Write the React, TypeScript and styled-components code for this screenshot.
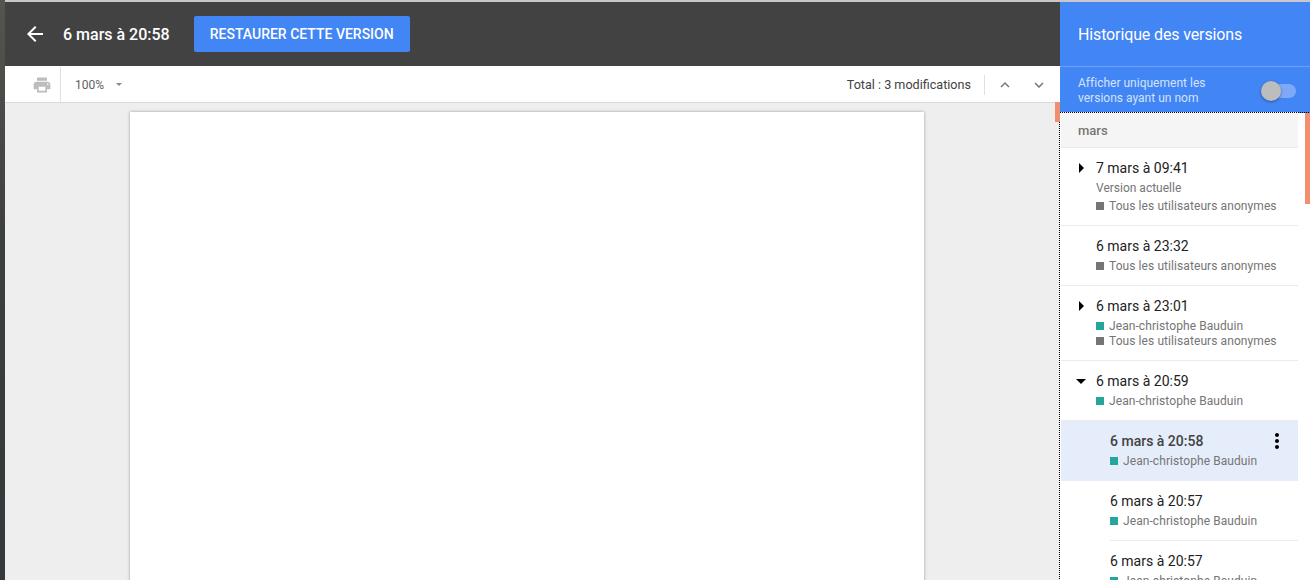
import React from 'react';
import styled, { createGlobalStyle } from 'styled-components';

const GlobalStyle = createGlobalStyle`
    html, body {
        margin: 0;
        padding: 0;
        background: #fff;
    }
    body {
        font-family: Roboto, "Liberation Sans", sans-serif;
    }
`;

type Editor = { name: string, color: string };
type Revision = {
    time: string,
    caret?: 'right' | 'down',
    note?: string,
    editors: Editor[],
    nested?: boolean,
    selected?: boolean,
    inset?: boolean,
};

const anon: Editor = { name: 'Tous les utilisateurs anonymes', color: '#757575' };
const jc: Editor = { name: 'Jean-christophe Bauduin', color: '#26a69a' };

const revisions: Revision[] = [
    { time: '7 mars à 09:41', caret: 'right', note: 'Version actuelle', editors: [anon] },
    { time: '6 mars à 23:32', editors: [anon] },
    { time: '6 mars à 23:01', caret: 'right', editors: [jc, anon] },
    { time: '6 mars à 20:59', caret: 'down', editors: [jc] },
    { time: '6 mars à 20:58', nested: true, selected: true, editors: [jc] },
    { time: '6 mars à 20:57', nested: true, inset: true, editors: [jc] },
    { time: '6 mars à 20:57', nested: true, editors: [jc] },
];

const Screen = styled.div`
    display: flex;
    position: relative;
    width: 1310px;
    height: 580px;
    overflow: hidden;
`;

const Desktop = styled.div`
    width: 5px;
    flex: none;
    background: linear-gradient(180deg, #55554f 0%, #3d4040 40%, #34383a 100%);
`;

const Main = styled.div`
    flex: 1;
    min-width: 0;
    display: flex;
    flex-direction: column;
    border-top: 2px solid #c8c8c8;
`;

const TopBar = styled.div`
    height: 64px;
    flex: none;
    display: flex;
    align-items: center;
    background: #424242;
    color: #fff;
`;

const BackIcon = styled.svg`
    width: 24px;
    height: 24px;
    margin-left: 18px;
    fill: #fff;
`;

const DateTitle = styled.div`
    margin-left: 16px;
    font-size: 16px;
    font-weight: 500;
    color: #fff;
`;

const RestoreButton = styled.button`
    margin-left: 24px;
    height: 36px;
    width: 216px;
    padding: 0;
    border: 0;
    border-radius: 2px;
    background: #4285f4;
    color: #fff;
    font-family: inherit;
    font-size: 14px;
    font-weight: 500;
    text-transform: uppercase;
`;

const ToolBar = styled.div`
    height: 37px;
    box-sizing: border-box;
    flex: none;
    display: flex;
    align-items: center;
    background: #fff;
    border-top: 1px solid #fff;
    border-bottom: 1px solid #dadada;
`;

const PrintSlot = styled.div`
    width: 56px;
    height: 100%;
    display: flex;
    align-items: center;
    justify-content: flex-end;
    padding-right: 8px;
    box-sizing: border-box;
    border-right: 1px solid #e0e0e0;
    svg {
        width: 20px;
        height: 20px;
        fill: #bdbdbd;
    }
`;

const Zoom = styled.div`
    margin-left: 14px;
    font-size: 12px;
    color: #616161;
`;

const ZoomCaret = styled.span`
    margin-left: 12px;
    width: 0;
    height: 0;
    border-left: 3px solid transparent;
    border-right: 3px solid transparent;
    border-top: 3px solid #8a8a8a;
`;

const Total = styled.div`
    margin-left: auto;
    padding-right: 13px;
    font-size: 12.6px;
    color: #424242;
    line-height: 20px;
`;

const Nav = styled.div`
    display: flex;
    align-items: center;
    gap: 16px;
    height: 20px;
    padding: 0 12px 0 11px;
    border-left: 1px solid #e0e0e0;
    svg {
        width: 18px;
        height: 18px;
        fill: #757575;
    }
`;

const Canvas = styled.div`
    flex: 1;
    min-height: 0;
    background: #eeeeee;
    padding: 9px 0 0 125px;
`;

const Page = styled.div`
    width: 794px;
    height: 600px;
    background: #fff;
    box-shadow: 0 0 3px rgba(0, 0, 0, 0.35);
`;

const Sidebar = styled.div`
    width: 250px;
    flex: none;
    display: flex;
    flex-direction: column;
    border-top: 2px solid #c8c8c8;
`;

const SideHead = styled.div`
    height: 64px;
    flex: none;
    display: flex;
    align-items: center;
    padding-left: 18px;
    background: #4285f4;
    color: #fff;
    font-size: 16px;
    letter-spacing: -0.13px;
    border-bottom: 1px solid #6d9ff6;
`;

const FilterRow = styled.div`
    height: 46px;
    flex: none;
    display: flex;
    align-items: center;
    justify-content: space-between;
    box-sizing: border-box;
    padding: 1px 14px 0 18px;
    background: #4285f4;
    color: #d5e3fc;
    font-size: 12px;
    line-height: 15px;
    letter-spacing: 0.01px;
`;

const Toggle = styled.div`
    position: relative;
    width: 34px;
    height: 14px;
    border-radius: 7px;
    background: #7ea9f7;
`;

const Thumb = styled.span`
    position: absolute;
    left: -1px;
    top: -3px;
    width: 20px;
    height: 20px;
    border-radius: 50%;
    background: #bdbdbd;
    box-shadow: 0 1px 3px rgba(0, 0, 0, 0.35);
`;

const ListPane = styled.div`
    position: relative;
    flex: 1;
    min-height: 0;
    background: #fff;
    outline: 1px dotted #000;
`;

const List = styled.div`
    width: 237px;
    margin-left: 1px;
`;

const MonthHead = styled.div`
    height: 34px;
    box-sizing: content-box;
    display: flex;
    align-items: center;
    padding: 1px 0 0 17px;
    margin-top: -1px;
    background: #f5f5f5;
    border-bottom: 1px solid #ebebeb;
    color: #757575;
    font-size: 13px;
    font-weight: 500;
`;

const Row = styled.div<{ $nested?: boolean, $selected?: boolean, $plain?: boolean }>`
    position: relative;
    box-sizing: border-box;
    padding: 10px 0 12px ${p => p.$nested ? 49 : 35}px;
    background: ${p => p.$selected ? '#e5edfb' : '#fff'};
    border-bottom: ${p => p.$plain ? 'none' : p.$selected ? '1px solid #e5edfb' : '1px solid #ebebeb'};
`;

const InsetRule = styled.div`
    height: 1px;
    margin-left: 49px;
    background: #ebebeb;
`;

const Time = styled.div<{ $selected?: boolean }>`
    font-size: 14px;
    line-height: 20px;
    color: ${p => p.$selected ? '#424242' : '#212121'};
    font-weight: ${p => p.$selected ? 500 : 400};
`;

const Note = styled.div`
    font-size: 12px;
    line-height: 15px;
    margin-top: 3px;
    color: #757575;
`;

const Editors = styled.div`
    margin-top: 2px;
`;

const EditorLine = styled.div`
    display: flex;
    align-items: center;
    height: 15px;
    font-size: 12px;
    letter-spacing: 0.08px;
    color: #757575;
`;

const Swatch = styled.span<{ $color: string }>`
    width: 8px;
    height: 8px;
    margin-right: 5px;
    flex: none;
    background: ${p => p.$color};
`;

const CaretRight = styled.span`
    position: absolute;
    left: 18px;
    top: 15px;
    width: 0;
    height: 0;
    border-top: 5px solid transparent;
    border-bottom: 5px solid transparent;
    border-left: 5px solid #000;
`;

const CaretDown = styled.span`
    position: absolute;
    left: 15px;
    top: 18px;
    width: 0;
    height: 0;
    border-left: 5px solid transparent;
    border-right: 5px solid transparent;
    border-top: 5px solid #000;
`;

const MoreIcon = styled.svg`
    position: absolute;
    right: 9px;
    top: 8px;
    width: 24px;
    height: 24px;
    fill: #000;
`;

const Tick = styled.div`
    position: absolute;
    left: 1055px;
    top: 102px;
    width: 5px;
    height: 20px;
    background: #ef8f6f;
`;

const ScrollMark = styled.div`
    position: absolute;
    right: 0;
    top: 0;
    width: 5px;
    height: 91px;
    background: #f48f6e;
`;

const App: React.FC = () => {
    return (
        <Screen>
            <GlobalStyle />
            <Desktop />
            <Main>
                <TopBar>
                    <BackIcon viewBox="0 0 24 24">
                        <path d="M20 11H7.83l5.59-5.59L12 4l-8 8 8 8 1.41-1.41L7.83 13H20v-2z" />
                    </BackIcon>
                    <DateTitle>6 mars à 20:58</DateTitle>
                    <RestoreButton>Restaurer cette version</RestoreButton>
                </TopBar>
                <ToolBar>
                    <PrintSlot>
                        <svg viewBox="0 0 24 24">
                            <path d="M19 8H5c-1.66 0-3 1.34-3 3v6h4v4h12v-4h4v-6c0-1.66-1.34-3-3-3zm-3 11H8v-5h8v5zm3-7c-.55 0-1-.45-1-1s.45-1 1-1 1 .45 1 1-.45 1-1 1zm-1-9H6v4h12V3z" />
                        </svg>
                    </PrintSlot>
                    <Zoom>100%</Zoom>
                    <ZoomCaret />
                    <Total>Total : 3 modifications</Total>
                    <Nav>
                        <svg viewBox="0 0 24 24">
                            <path d="M12 8l-6 6 1.41 1.41L12 10.83l4.59 4.58L18 14z" />
                        </svg>
                        <svg viewBox="0 0 24 24">
                            <path d="M16.59 8.59L12 13.17 7.41 8.59 6 10l6 6 6-6z" />
                        </svg>
                    </Nav>
                </ToolBar>
                <Canvas>
                    <Page />
                </Canvas>
            </Main>
            <Sidebar>
                <SideHead>Historique des versions</SideHead>
                <FilterRow>
                    <div>Afficher uniquement les<br />versions ayant un nom</div>
                    <Toggle><Thumb /></Toggle>
                </FilterRow>
                <ListPane>
                    <List>
                        <MonthHead>mars</MonthHead>
                        {revisions.map((r, i) => (
                            <React.Fragment key={i}>
                                <Row $nested={r.nested} $selected={r.selected} $plain={r.inset}>
                                    {r.caret === 'right' && <CaretRight />}
                                    {r.caret === 'down' && <CaretDown />}
                                    <Time $selected={r.selected}>{r.time}</Time>
                                    {r.note && <Note>{r.note}</Note>}
                                    <Editors>
                                        {r.editors.map(e => (
                                            <EditorLine key={e.name}>
                                                <Swatch $color={e.color} />
                                                {e.name}
                                            </EditorLine>
                                        ))}
                                    </Editors>
                                    {r.selected && (
                                        <MoreIcon viewBox="0 0 24 24">
                                            <path d="M12 8c1.1 0 2-.9 2-2s-.9-2-2-2-2 .9-2 2 .9 2 2 2zm0 2c-1.1 0-2 .9-2 2s.9 2 2 2 2-.9 2-2-.9-2-2-2zm0 6c-1.1 0-2 .9-2 2s.9 2 2 2 2-.9 2-2-.9-2-2-2z" />
                                        </MoreIcon>
                                    )}
                                </Row>
                                {r.inset && <InsetRule />}
                            </React.Fragment>
                        ))}
                    </List>
                    <ScrollMark />
                </ListPane>
            </Sidebar>
            <Tick />
        </Screen>
    );
};

export default App;
